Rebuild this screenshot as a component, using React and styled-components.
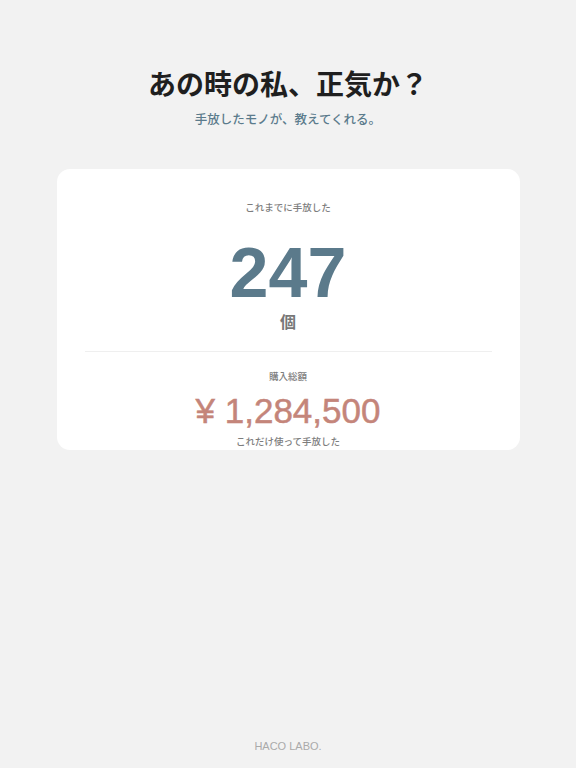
import React from 'react';
import styled, { createGlobalStyle } from 'styled-components';

const GlobalStyle = createGlobalStyle`
  html, body {
    margin: 0;
    padding: 0;
    background: #f2f2f2;
    font-family: "Liberation Sans", "Noto Sans CJK JP", sans-serif;
  }
`;

const Page = styled.div`
  min-height: 100vh;
  display: flex;
  flex-direction: column;
  align-items: center;
  box-sizing: border-box;
  padding: 66px 56px 14px;
`;

const Header = styled.header`
  display: flex;
  flex-direction: column;
  align-items: center;
  gap: 5px;
`;

const Title = styled.h1`
  margin: 0;
  font-size: 28px;
  line-height: 1.4;
  font-weight: 700;
  color: #1f1f1f;
`;

const Subtitle = styled.p`
  margin: 0;
  font-size: 12.5px;
  line-height: 20px;
  font-weight: 500;
  color: #5b7b8c;
`;

const Card = styled.section`
  margin-top: 39px;
  width: 463px;
  box-sizing: border-box;
  background: #ffffff;
  border-radius: 13px;
  padding: 31px 28px 0;
  display: flex;
  flex-direction: column;
  align-items: center;
`;

const Label = styled.div`
  font-size: 9.5px;
  line-height: 16px;
  font-weight: 500;
  color: #7d7d7d;
  margin-top: ${p => p.$top || 0}px;
`;

const Count = styled.div`
  margin-top: 22px;
  font-size: 70px;
  line-height: 1;
  font-weight: 700;
  color: #5b7a8b;
`;

const Unit = styled.div`
  margin-top: 3px;
  font-size: 16px;
  line-height: 24px;
  font-weight: 700;
  color: #777;
`;

const Divider = styled.hr`
  align-self: stretch;
  border: 0;
  border-top: 1px solid #efefef;
  margin: 16px 0 17px;
`;

const Amount = styled.div`
  margin-top: 5px;
  font-size: 35px;
  line-height: 1.2;
  font-weight: 400;
  color: #c4857a;
  -webkit-text-stroke: 0.5px #c4857a;
`;

const Footer = styled.footer`
  margin-top: auto;
  font-size: 11px;
  line-height: 1.5;
  color: #aaaaaa;
`;

export default function App() {
  return (
    <>
      <GlobalStyle />
      <Page>
        <Header>
          <Title>あの時の私、正気か？</Title>
          <Subtitle>手放したモノが、教えてくれる。</Subtitle>
        </Header>
        <Card>
          <Label>これまでに手放した</Label>
          <Count>247</Count>
          <Unit>個</Unit>
          <Divider />
          <Label>購入総額</Label>
          <Amount>¥ 1,284,500</Amount>
          <Label $top={2}>これだけ使って手放した</Label>
        </Card>
        <Footer>HACO LABO.</Footer>
      </Page>
    </>
  );
}
